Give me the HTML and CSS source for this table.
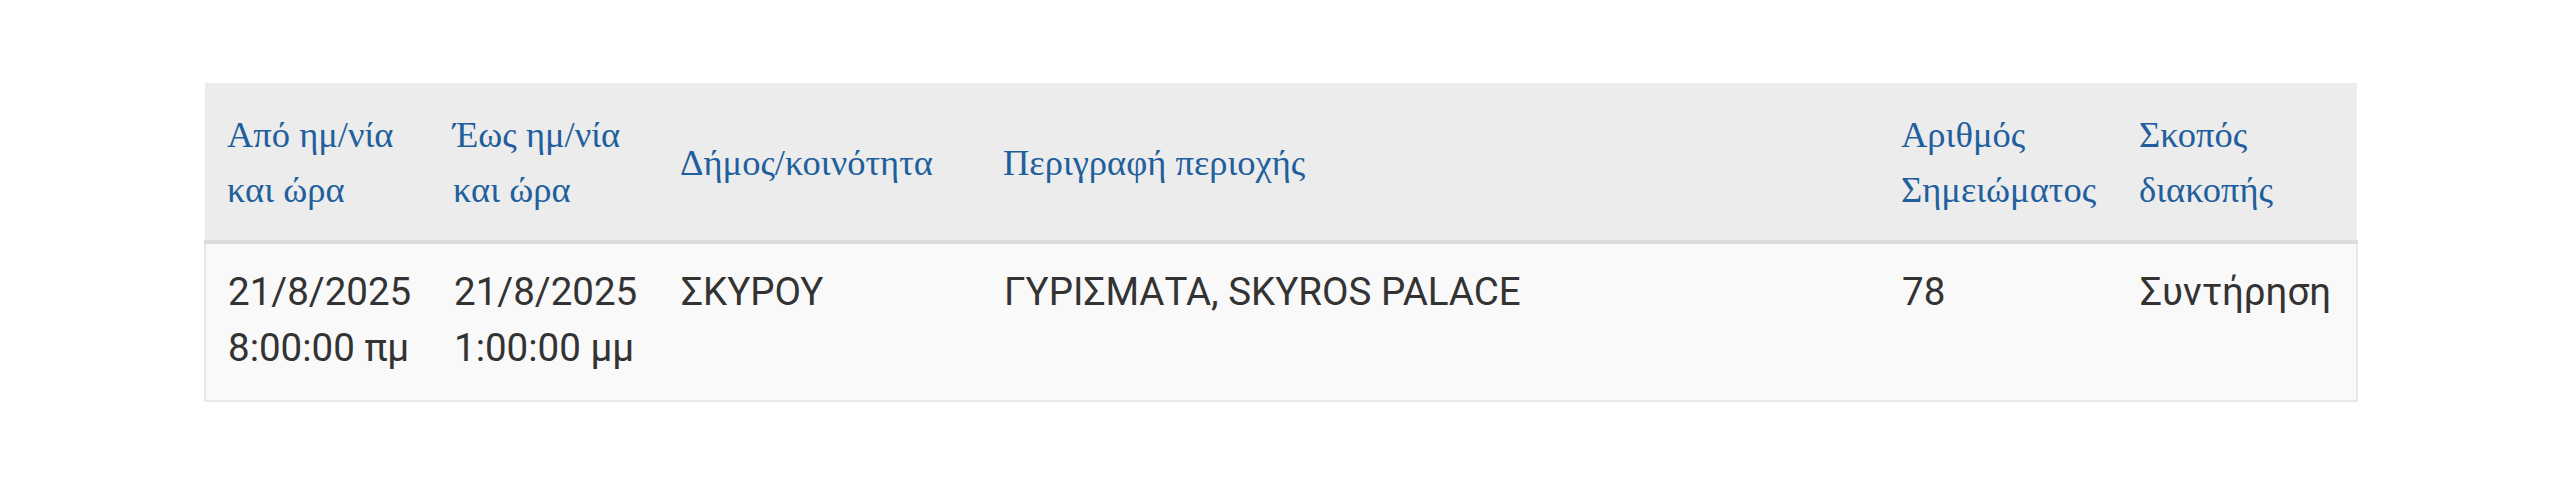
FILE: index.html
```html
<!DOCTYPE html>
<html lang="el">
<head>
<meta charset="utf-8">
<title>Διακοπές</title>
<link rel="stylesheet" href="styles.css">
</head>
<body>
<div class="wrap">
  <table class="outages">
    <colgroup>
      <col class="c1"><col class="c2"><col class="c3"><col class="c4"><col class="c5"><col class="c6">
    </colgroup>
    <thead>
      <tr>
        <th>Από ημ/νία<br>και ώρα</th>
        <th>Έως ημ/νία<br>και ώρα</th>
        <th>Δήμος/κοινότητα</th>
        <th>Περιγραφή περιοχής</th>
        <th>Αριθμός<br>Σημειώματος</th>
        <th>Σκοπός<br>διακοπής</th>
      </tr>
    </thead>
    <tbody>
      <tr>
        <td>21/8/2025<br>8:00:00 πμ</td>
        <td>21/8/2025<br>1:00:00 μμ</td>
        <td>ΣΚΥΡΟΥ</td>
        <td>ΓΥΡΙΣΜΑΤΑ, SKYROS PALACE</td>
        <td>78</td>
        <td>Συντήρηση</td>
      </tr>
    </tbody>
  </table>
</div>
</body>
</html>
```
FILE: styles.css
```css
html, body {
  margin: 0;
  padding: 0;
  background: #ffffff;
}

.wrap {
  padding: 83px 204px 0 204px;
}

.outages {
  width: 2152px;
  border-collapse: collapse;
  table-layout: fixed;
}

.c1 { width: 224px; }
.c2 { width: 227px; }
.c3 { width: 323px; }
.c4 { width: 898px; }
.c5 { width: 238px; }
.c6 { width: 242px; }

.outages thead th {
  background: #ececec;
  color: #1f5f9d;
  font-family: "Liberation Serif", "Times New Roman", serif;
  font-weight: normal;
  font-size: 36.5px;
  line-height: 55px;
  text-align: left;
  vertical-align: middle;
  padding: 24px 8px 23px 24px;
  border-bottom: 4px solid #dcdcdc;
  white-space: nowrap;
}

.outages thead th:first-child {
  padding-left: 22px;
}

.outages tbody td {
  background: #f9f9f9;
  color: #333333;
  font-family: Roboto, "Noto Sans", sans-serif;
  font-size: 38.5px;
  line-height: 56px;
  text-align: left;
  vertical-align: top;
  padding: 20px 8px 24px 25px;
  border-bottom: 2px solid #e8e8e8;
  white-space: nowrap;
}

.outages tbody td:first-child {
  border-left: 2px solid #e8e8e8;
  padding-left: 22px;
}

.outages tbody td:last-child {
  border-right: 2px solid #e8e8e8;
}
```
